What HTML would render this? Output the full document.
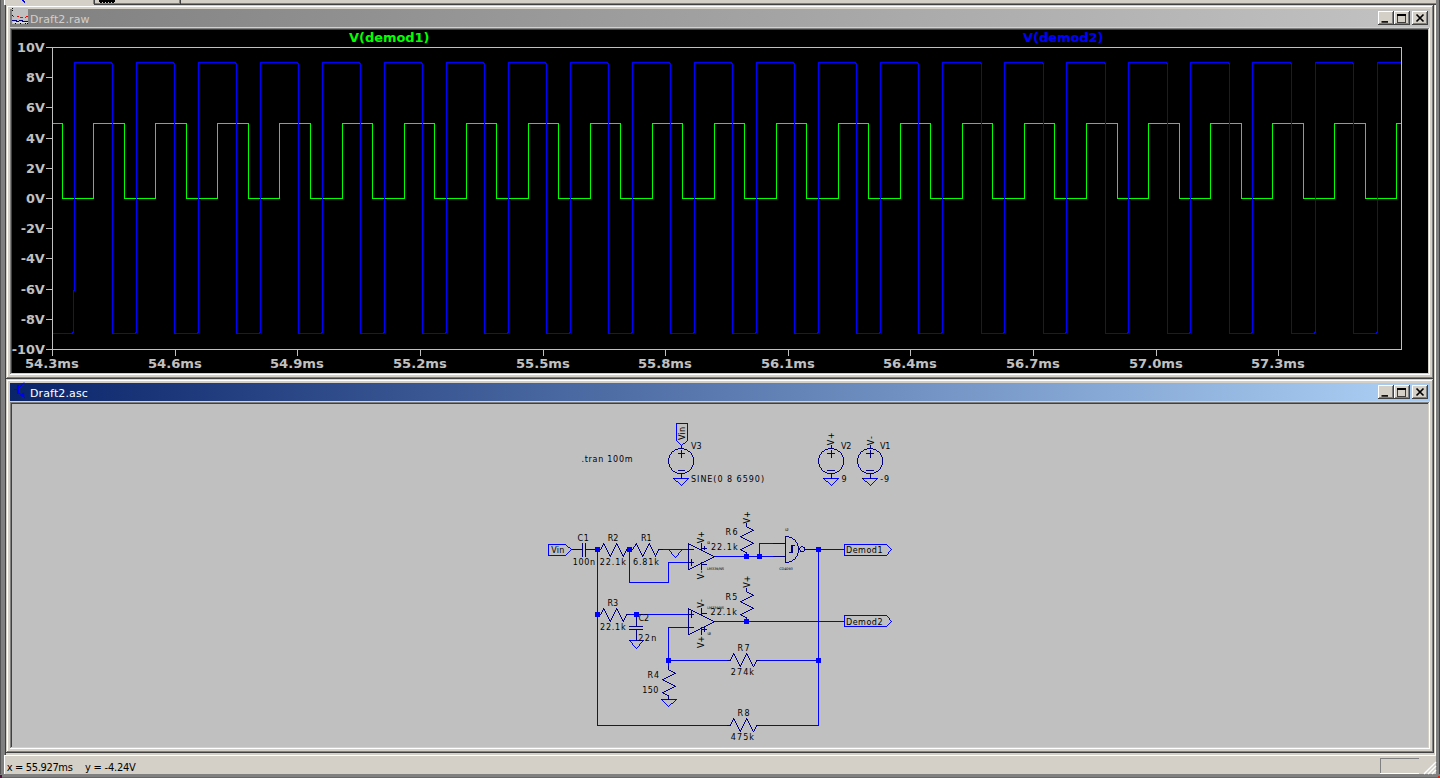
<!DOCTYPE html><html><head><meta charset="utf-8"><title>LTspice</title><style>
html,body{margin:0;padding:0;}body{width:1440px;height:778px;overflow:hidden;background:#d4d0c8;position:relative;font-family:"DejaVu Sans","Liberation Sans",sans-serif;font-size:11px;}
div{box-sizing:border-box}
.btn{position:absolute;width:16px;height:14px;background:#d4d0c8;box-shadow:inset -1px -1px 0 #404040,inset 1px 1px 0 #fff,inset -2px -2px 0 #808080;}
.ttl{letter-spacing:0.12px;position:absolute;left:31px;top:2px;height:18px;line-height:18px;font-size:11px;white-space:pre;}
svg{position:absolute;left:0;top:0;overflow:visible}
</style></head><body>
<div style="position:absolute;left:0px;top:0px;width:5px;height:778px;background:#808080;"></div>
<div style="position:absolute;left:0px;top:0px;width:1px;height:778px;background:#555;"></div>
<div style="position:absolute;left:4px;top:0px;width:1px;height:5px;background:#ffffff;"></div>
<div style="position:absolute;left:1436px;top:0px;width:4px;height:778px;background:#808080;"></div>
<div style="position:absolute;left:1439px;top:0px;width:1px;height:778px;background:#404040;"></div>
<div style="position:absolute;left:0px;top:774px;width:1440px;height:4px;background:#808080;"></div>
<div style="position:absolute;left:0px;top:777px;width:1440px;height:1px;background:#666;"></div>
<div style="position:absolute;left:94px;top:3px;width:1342px;height:1px;background:#808080;"></div>
<div style="position:absolute;left:94px;top:4px;width:1342px;height:1px;background:#404040;"></div>
<div style="position:absolute;left:93px;top:0px;width:1px;height:4px;background:#808080;"></div>
<div style="position:absolute;left:94px;top:0px;width:1px;height:5px;background:#404040;"></div>
<div style="position:absolute;left:179px;top:0px;width:1px;height:4px;background:#808080;"></div>
<div style="position:absolute;left:180px;top:0px;width:1px;height:4px;background:#404040;"></div>
<div style="position:absolute;left:22px;top:0px;width:2px;height:1px;background:#0000ff;"></div>
<div style="position:absolute;left:23px;top:1px;width:2px;height:1px;background:#0000ff;"></div>
<div style="position:absolute;left:24px;top:2px;width:1px;height:1px;background:#0000ff;"></div>
<div style="position:absolute;left:99px;top:0px;width:16px;height:2px;background:#000;"></div>
<div style="position:absolute;left:100px;top:2px;width:2px;height:1px;background:#000;"></div>
<div style="position:absolute;left:103px;top:2px;width:2px;height:1px;background:#000;"></div>
<div style="position:absolute;left:106px;top:2px;width:2px;height:1px;background:#000;"></div>
<div style="position:absolute;left:109px;top:2px;width:2px;height:1px;background:#000;"></div>
<div style="position:absolute;left:112px;top:2px;width:2px;height:1px;background:#000;"></div>
<div style="position:absolute;left:5px;top:5px;width:1px;height:750px;background:#404040;"></div>
<div style="position:absolute;left:1434px;top:5px;width:1px;height:750px;background:#d4d0c8;"></div>
<div style="position:absolute;left:1435px;top:5px;width:1px;height:751px;background:#ffffff;"></div>
<div style="position:absolute;left:6px;top:753px;width:1428px;height:1px;background:#d4d0c8;"></div>
<div style="position:absolute;left:4px;top:755px;width:1432px;height:1px;background:#ffffff;"></div>
<div style="position:absolute;left:4px;top:755px;width:1px;height:19px;background:#ffffff;"></div>
<div style="position:absolute;left:6px;top:5px;width:1428px;height:374px;background:#d4d0c8;box-shadow:inset -1px -1px 0 #404040,inset 1px 1px 0 #d4d0c8,inset -2px -2px 0 #808080,inset 2px 2px 0 #ffffff;">
<div style="position:absolute;left:4px;top:4px;width:1420px;height:18px;background:linear-gradient(to right,#808080 0,#c0c0c0 1366px);color:#d4d0c8;">
<span class="ttl" style="left:20px">Draft2.raw</span>
<div class="btn" style="left:1368px;top:2px"><svg width="16" height="14"><rect x="3.5" y="10.1" width="6.5" height="1.6" fill="#000"/></svg></div>
<div class="btn" style="left:1384px;top:2px"><svg width="16" height="14"><rect x="3.5" y="3.5" width="8" height="8" fill="none" stroke="#000" stroke-opacity="0.7" stroke-width="1"/><rect x="3" y="3" width="9" height="2" fill="#000"/></svg></div>
<div class="btn" style="left:1402px;top:2px"><svg width="16" height="14"><path d="M4.5 3.5 L11.5 10.5 M11.5 3.5 L4.5 10.5" stroke="#000" stroke-width="1.7" fill="none"/></svg></div>
</div>
<div style="position:absolute;left:4px;top:23px;width:1420px;height:347px;background:#000;box-shadow:inset -1px -1px 0 #ffffff,inset 1px 1px 0 #808080,inset -2px -2px 0 #d4d0c8,inset 2px 2px 0 #404040;"></div>
</div>
<div style="position:absolute;left:6px;top:379px;width:1428px;height:374px;background:#d4d0c8;box-shadow:inset -1px -1px 0 #404040,inset 1px 1px 0 #d4d0c8,inset -2px -2px 0 #808080,inset 2px 2px 0 #ffffff;">
<div style="position:absolute;left:4px;top:4px;width:1420px;height:18px;background:linear-gradient(to right,#0a246a 0,#a6caf0 1366px);color:#fff;">
<span class="ttl" style="left:20px">Draft2.asc</span>
<div class="btn" style="left:1368px;top:2px"><svg width="16" height="14"><rect x="3.5" y="10.1" width="6.5" height="1.6" fill="#000"/></svg></div>
<div class="btn" style="left:1384px;top:2px"><svg width="16" height="14"><rect x="3.5" y="3.5" width="8" height="8" fill="none" stroke="#000" stroke-opacity="0.7" stroke-width="1"/><rect x="3" y="3" width="9" height="2" fill="#000"/></svg></div>
<div class="btn" style="left:1402px;top:2px"><svg width="16" height="14"><path d="M4.5 3.5 L11.5 10.5 M11.5 3.5 L4.5 10.5" stroke="#000" stroke-width="1.7" fill="none"/></svg></div>
</div>
<div style="position:absolute;left:4px;top:23px;width:1420px;height:347px;background:#c0c0c0;box-shadow:inset -1px -1px 0 #ffffff,inset 1px 1px 0 #808080,inset -2px -2px 0 #d4d0c8,inset 2px 2px 0 #404040;"></div>
</div>
<svg width="1440" height="778" shape-rendering="crispEdges">
<rect x="12" y="8" width="16" height="16" fill="#c0c0c0"/>
<rect x="12" y="8" width="1" height="1" fill="#000"/>
<rect x="12" y="10" width="1" height="1" fill="#000"/>
<rect x="12" y="15" width="1" height="1" fill="#000"/>
<rect x="12" y="20" width="1" height="1" fill="#000"/>
<rect x="15" y="23" width="1" height="1" fill="#000"/>
<rect x="20" y="23" width="1" height="1" fill="#000"/>
<rect x="25" y="23" width="1" height="1" fill="#000"/>
<rect x="27" y="23" width="1" height="1" fill="#000"/>
<rect x="13" y="22" width="15" height="1" fill="#e0e0e0"/>
<path d="M13 16.5h1 M17 16.5h2 M20 17.5h3 M25 17.5h1 M26 16.5h2" stroke="#ff0000" stroke-width="1" fill="none"/>
<path d="M12 20.5h5 M16 21.5h3 M19 20.5h4 M22 21.5h6" stroke="#000080" stroke-width="1.4" fill="none"/>
<g stroke="#0000ff" fill="none" stroke-width="1">
<path d="M14 389.5h4" />
<path d="M18 385v9" stroke-width="2"/>
<path d="M19 388 L24 382.5" shape-rendering="auto"/>
<path d="M19 393 L25 398" shape-rendering="auto"/>
<path d="M20.5 395.5 l3 -2.5 l0.5 3.5 z" fill="#0000ff" shape-rendering="auto"/>
</g>
</svg>
<svg width="1440" height="778" shape-rendering="crispEdges" style="font-family:'DejaVu Sans',sans-serif;font-weight:bold;font-size:12px">
<path d="M52.5 47.5 H1401.5 V349.5 H52.5 Z" fill="none" stroke="#c0c0c0" stroke-width="1"/>
<path d="M46 47.5 H52" stroke="#c0c0c0" stroke-width="1"/>
<text transform="translate(44.8 51.9) scale(1.07 1)" text-anchor="end" fill="#c0c0c0">10V</text>
<path d="M46 77.5 H52" stroke="#c0c0c0" stroke-width="1"/>
<text transform="translate(44.8 81.9) scale(1.07 1)" text-anchor="end" fill="#c0c0c0">8V</text>
<path d="M46 107.5 H52" stroke="#c0c0c0" stroke-width="1"/>
<text transform="translate(44.8 111.9) scale(1.07 1)" text-anchor="end" fill="#c0c0c0">6V</text>
<path d="M46 138.5 H52" stroke="#c0c0c0" stroke-width="1"/>
<text transform="translate(44.8 142.9) scale(1.07 1)" text-anchor="end" fill="#c0c0c0">4V</text>
<path d="M46 168.5 H52" stroke="#c0c0c0" stroke-width="1"/>
<text transform="translate(44.8 172.9) scale(1.07 1)" text-anchor="end" fill="#c0c0c0">2V</text>
<path d="M46 198.5 H52" stroke="#c0c0c0" stroke-width="1"/>
<text transform="translate(44.8 202.9) scale(1.07 1)" text-anchor="end" fill="#c0c0c0">0V</text>
<path d="M46 228.5 H52" stroke="#c0c0c0" stroke-width="1"/>
<text transform="translate(44.8 232.9) scale(1.07 1)" text-anchor="end" fill="#c0c0c0">-2V</text>
<path d="M46 258.5 H52" stroke="#c0c0c0" stroke-width="1"/>
<text transform="translate(44.8 262.9) scale(1.07 1)" text-anchor="end" fill="#c0c0c0">-4V</text>
<path d="M46 289.5 H52" stroke="#c0c0c0" stroke-width="1"/>
<text transform="translate(44.8 293.9) scale(1.07 1)" text-anchor="end" fill="#c0c0c0">-6V</text>
<path d="M46 319.5 H52" stroke="#c0c0c0" stroke-width="1"/>
<text transform="translate(44.8 323.9) scale(1.07 1)" text-anchor="end" fill="#c0c0c0">-8V</text>
<path d="M46 349.5 H52" stroke="#c0c0c0" stroke-width="1"/>
<text transform="translate(44.8 353.9) scale(1.07 1)" text-anchor="end" fill="#c0c0c0">-10V</text>
<path d="M52.5 349 V356" stroke="#c0c0c0" stroke-width="1"/>
<text transform="translate(51.9 368) scale(1.095 1)" text-anchor="middle" fill="#c0c0c0">54.3ms</text>
<path d="M175.5 349 V356" stroke="#c0c0c0" stroke-width="1"/>
<text transform="translate(174.9 368) scale(1.095 1)" text-anchor="middle" fill="#c0c0c0">54.6ms</text>
<path d="M297.5 349 V356" stroke="#c0c0c0" stroke-width="1"/>
<text transform="translate(296.9 368) scale(1.095 1)" text-anchor="middle" fill="#c0c0c0">54.9ms</text>
<path d="M420.5 349 V356" stroke="#c0c0c0" stroke-width="1"/>
<text transform="translate(419.9 368) scale(1.095 1)" text-anchor="middle" fill="#c0c0c0">55.2ms</text>
<path d="M543.5 349 V356" stroke="#c0c0c0" stroke-width="1"/>
<text transform="translate(542.9 368) scale(1.095 1)" text-anchor="middle" fill="#c0c0c0">55.5ms</text>
<path d="M665.5 349 V356" stroke="#c0c0c0" stroke-width="1"/>
<text transform="translate(664.9 368) scale(1.095 1)" text-anchor="middle" fill="#c0c0c0">55.8ms</text>
<path d="M788.5 349 V356" stroke="#c0c0c0" stroke-width="1"/>
<text transform="translate(787.9 368) scale(1.095 1)" text-anchor="middle" fill="#c0c0c0">56.1ms</text>
<path d="M910.5 349 V356" stroke="#c0c0c0" stroke-width="1"/>
<text transform="translate(909.9 368) scale(1.095 1)" text-anchor="middle" fill="#c0c0c0">56.4ms</text>
<path d="M1033.5 349 V356" stroke="#c0c0c0" stroke-width="1"/>
<text transform="translate(1032.9 368) scale(1.095 1)" text-anchor="middle" fill="#c0c0c0">56.7ms</text>
<path d="M1156.5 349 V356" stroke="#c0c0c0" stroke-width="1"/>
<text transform="translate(1155.9 368) scale(1.095 1)" text-anchor="middle" fill="#c0c0c0">57.0ms</text>
<path d="M1278.5 349 V356" stroke="#c0c0c0" stroke-width="1"/>
<text transform="translate(1277.9 368) scale(1.095 1)" text-anchor="middle" fill="#c0c0c0">57.3ms</text>
<path d="M52.5 123.5 H62.5 V198.5 H93.5 V123.5 H124.5 V198.5 H155.5 V123.5 H186.5 V198.5 H217.5 V123.5 H248.5 V198.5 H279.5 V123.5 H310.5 V198.5 H342.5 V123.5 H372.5 V198.5 H404.5 V123.5 H434.5 V198.5 H466.5 V123.5 H496.5 V198.5 H528.5 V123.5 H558.5 V198.5 H590.5 V123.5 H620.5 V198.5 H652.5 V123.5 H682.5 V198.5 H714.5 V123.5 H744.5 V198.5 H776.5 V123.5 H806.5 V198.5 H838.5 V123.5 H868.5 V198.5 H900.5 V123.5 H930.5 V198.5 H962.5 V123.5 H992.5 V198.5 H1024.5 V123.5 H1054.5 V198.5 H1086.5 V123.5 H1117.5 V198.5 H1148.5 V123.5 H1179.5 V198.5 H1210.5 V123.5 H1241.5 V198.5 H1272.5 V123.5 H1303.5 V198.5 H1334.5 V123.5 H1365.5 V198.5 H1396.5 V123.5 H1400.5" fill="none" stroke="#00ff00" stroke-width="1"/>
<path d="M52.5 333.5 H72.5 V332.5 H73.5 V290.5 H74.5 V62.5 H111.5 V63.5 H112.5 V333.5 H135.5 V332.5 H136.5 V62.5 H173.5 V63.5 H174.5 V333.5 H197.5 V332.5 H198.5 V62.5 H235.5 V63.5 H236.5 V333.5 H259.5 V332.5 H260.5 V62.5 H297.5 V63.5 H298.5 V333.5 H321.5 V332.5 H322.5 V62.5 H359.5 V63.5 H360.5 V333.5 H383.5 V332.5 H384.5 V62.5 H421.5 V63.5 H422.5 V333.5 H445.5 V332.5 H446.5 V62.5 H483.5 V63.5 H484.5 V333.5 H507.5 V332.5 H508.5 V62.5 H545.5 V63.5 H546.5 V333.5 H569.5 V332.5 H570.5 V62.5 H607.5 V63.5 H608.5 V333.5 H631.5 V332.5 H632.5 V62.5 H669.5 V63.5 H670.5 V333.5 H693.5 V332.5 H694.5 V62.5 H731.5 V63.5 H732.5 V333.5 H755.5 V332.5 H756.5 V62.5 H793.5 V63.5 H794.5 V333.5 H817.5 V332.5 H818.5 V62.5 H855.5 V63.5 H856.5 V333.5 H879.5 V332.5 H880.5 V62.5 H917.5 V63.5 H918.5 V333.5 H941.5 V332.5 H942.5 V62.5 H980.5 V63.5 H981.5 V333.5 H1003.5 V332.5 H1004.5 V62.5 H1042.5 V63.5 H1043.5 V333.5 H1065.5 V332.5 H1066.5 V62.5 H1104.5 V63.5 H1105.5 V333.5 H1127.5 V332.5 H1128.5 V62.5 H1166.5 V63.5 H1167.5 V333.5 H1189.5 V332.5 H1190.5 V62.5 H1228.5 V63.5 H1229.5 V333.5 H1251.5 V332.5 H1252.5 V62.5 H1290.5 V63.5 H1291.5 V333.5 H1314.5 V332.5 H1315.5 V62.5 H1352.5 V63.5 H1353.5 V333.5 H1376.5 V332.5 H1377.5 V62.5 H1400.5" fill="none" stroke="#0000ff" stroke-width="1"/>
<text x="349" y="42.05" fill="#00ff00" textLength="80.5" lengthAdjust="spacingAndGlyphs">V(demod1)</text>
<text x="1023" y="42.05" fill="#0000ff" textLength="80.5" lengthAdjust="spacingAndGlyphs">V(demod2)</text>
</svg>
<svg width="1440" height="778" shape-rendering="crispEdges" style="font-family:'DejaVu Sans',sans-serif;" fill="#000">
<path d="M676 423h12v1h-12zM676 424h1v1h-1zM687 424h1v1h-1zM676 425h1v1h-1zM687 425h1v1h-1zM676 426h1v1h-1zM687 426h1v1h-1zM676 427h1v1h-1zM687 427h1v1h-1zM676 428h1v1h-1zM687 428h1v1h-1zM676 429h1v1h-1zM687 429h1v1h-1zM676 430h1v1h-1zM687 430h1v1h-1zM676 431h1v1h-1zM687 431h1v1h-1zM676 432h1v1h-1zM687 432h1v1h-1zM676 433h1v1h-1zM687 433h1v1h-1zM676 434h1v1h-1zM687 434h1v1h-1zM676 435h1v1h-1zM687 435h1v1h-1zM676 436h1v1h-1zM687 436h1v1h-1zM676 437h1v1h-1zM687 437h1v1h-1zM676 438h1v1h-1zM687 438h1v1h-1zM676 439h1v1h-1zM687 439h1v1h-1zM676 440h1v1h-1zM687 440h1v1h-1zM677 441h1v1h-1zM686 441h1v1h-1zM678 442h1v1h-1zM685 442h1v1h-1zM679 443h1v1h-1zM683 443h2v1h-2zM680 444h1v1h-1zM682 444h1v1h-1zM673 478h8v1h-8zM682 478h7v1h-7zM823 478h8v1h-8zM832 478h7v1h-7zM862 478h8v1h-8zM871 478h7v1h-7zM674 479h1v1h-1zM687 479h1v1h-1zM824 479h1v1h-1zM837 479h1v1h-1zM863 479h1v1h-1zM876 479h1v1h-1zM675 480h1v1h-1zM686 480h1v1h-1zM825 480h1v1h-1zM836 480h1v1h-1zM864 480h1v1h-1zM875 480h1v1h-1zM676 481h2v1h-2zM685 481h1v1h-1zM826 481h2v1h-2zM835 481h1v1h-1zM865 481h2v1h-2zM874 481h1v1h-1zM678 482h1v1h-1zM684 482h1v1h-1zM828 482h1v1h-1zM834 482h1v1h-1zM867 482h1v1h-1zM873 482h1v1h-1zM679 483h1v1h-1zM683 483h1v1h-1zM829 483h1v1h-1zM833 483h1v1h-1zM868 483h1v1h-1zM872 483h1v1h-1zM680 484h1v1h-1zM682 484h1v1h-1zM830 484h1v1h-1zM832 484h1v1h-1zM869 484h1v1h-1zM871 484h1v1h-1zM681 485h1v1h-1zM831 485h1v1h-1zM870 485h1v1h-1zM759 543h14v1h-14zM548 544h18v1h-18zM759 544h1v1h-1zM844 544h43v1h-43zM548 545h1v1h-1zM566 545h1v1h-1zM759 545h1v1h-1zM844 545h1v1h-1zM887 545h1v1h-1zM548 546h1v1h-1zM567 546h1v1h-1zM759 546h1v1h-1zM844 546h1v1h-1zM888 546h1v1h-1zM548 547h1v1h-1zM568 547h2v1h-2zM595 547h5v1h-5zM627 547h5v1h-5zM759 547h1v1h-1zM816 547h5v1h-5zM844 547h1v1h-1zM889 547h1v1h-1zM548 548h1v1h-1zM570 548h1v1h-1zM595 548h5v1h-5zM627 548h5v1h-5zM759 548h1v1h-1zM816 548h5v1h-5zM844 548h1v1h-1zM890 548h1v1h-1zM548 549h1v1h-1zM595 549h5v1h-5zM627 549h5v1h-5zM663 549h25v1h-25zM759 549h1v1h-1zM816 549h29v1h-29zM891 549h1v1h-1zM548 550h1v1h-1zM570 550h1v1h-1zM595 550h5v1h-5zM627 550h5v1h-5zM669 550h1v1h-1zM681 550h1v1h-1zM759 550h1v1h-1zM816 550h5v1h-5zM844 550h1v1h-1zM890 550h1v1h-1zM548 551h1v1h-1zM569 551h1v1h-1zM595 551h5v1h-5zM627 551h5v1h-5zM670 551h1v1h-1zM680 551h1v1h-1zM759 551h1v1h-1zM816 551h5v1h-5zM844 551h1v1h-1zM889 551h1v1h-1zM548 552h1v1h-1zM568 552h1v1h-1zM597 552h1v1h-1zM629 552h1v1h-1zM671 552h1v1h-1zM679 552h1v1h-1zM759 552h1v1h-1zM818 552h1v1h-1zM844 552h1v1h-1zM888 552h1v1h-1zM548 553h1v1h-1zM567 553h1v1h-1zM597 553h1v1h-1zM629 553h1v1h-1zM671 553h1v1h-1zM678 553h1v1h-1zM759 553h1v1h-1zM818 553h1v1h-1zM844 553h1v1h-1zM888 553h1v1h-1zM548 554h1v1h-1zM566 554h1v1h-1zM597 554h1v1h-1zM629 554h1v1h-1zM672 554h1v1h-1zM678 554h1v1h-1zM744 554h5v1h-5zM757 554h5v1h-5zM818 554h1v1h-1zM844 554h1v1h-1zM887 554h1v1h-1zM548 555h18v1h-18zM597 555h1v1h-1zM629 555h1v1h-1zM673 555h1v1h-1zM677 555h1v1h-1zM744 555h5v1h-5zM757 555h5v1h-5zM818 555h1v1h-1zM844 555h43v1h-43zM597 556h1v1h-1zM629 556h1v1h-1zM674 556h1v1h-1zM676 556h1v1h-1zM715 556h58v1h-58zM818 556h1v1h-1zM597 557h1v1h-1zM629 557h1v1h-1zM675 557h1v1h-1zM744 557h5v1h-5zM757 557h5v1h-5zM818 557h1v1h-1zM597 558h1v1h-1zM629 558h1v1h-1zM744 558h5v1h-5zM757 558h5v1h-5zM818 558h1v1h-1zM597 559h1v1h-1zM629 559h1v1h-1zM818 559h1v1h-1zM597 560h1v1h-1zM629 560h1v1h-1zM818 560h1v1h-1zM597 561h1v1h-1zM629 561h1v1h-1zM818 561h1v1h-1zM597 562h1v1h-1zM629 562h1v1h-1zM668 562h20v1h-20zM818 562h1v1h-1zM597 563h1v1h-1zM629 563h1v1h-1zM668 563h1v1h-1zM818 563h1v1h-1zM597 564h1v1h-1zM629 564h1v1h-1zM668 564h1v1h-1zM818 564h1v1h-1zM597 565h1v1h-1zM629 565h1v1h-1zM668 565h1v1h-1zM818 565h1v1h-1zM597 566h1v1h-1zM629 566h1v1h-1zM668 566h1v1h-1zM818 566h1v1h-1zM597 567h1v1h-1zM629 567h1v1h-1zM668 567h1v1h-1zM818 567h1v1h-1zM597 568h1v1h-1zM629 568h1v1h-1zM668 568h1v1h-1zM818 568h1v1h-1zM597 569h1v1h-1zM629 569h1v1h-1zM668 569h1v1h-1zM818 569h1v1h-1zM597 570h1v1h-1zM629 570h1v1h-1zM668 570h1v1h-1zM818 570h1v1h-1zM597 571h1v1h-1zM629 571h1v1h-1zM668 571h1v1h-1zM818 571h1v1h-1zM597 572h1v1h-1zM629 572h1v1h-1zM668 572h1v1h-1zM818 572h1v1h-1zM597 573h1v1h-1zM629 573h1v1h-1zM668 573h1v1h-1zM818 573h1v1h-1zM597 574h1v1h-1zM629 574h1v1h-1zM668 574h1v1h-1zM818 574h1v1h-1zM597 575h1v1h-1zM629 575h1v1h-1zM668 575h1v1h-1zM818 575h1v1h-1zM597 576h1v1h-1zM629 576h1v1h-1zM668 576h1v1h-1zM818 576h1v1h-1zM597 577h1v1h-1zM629 577h1v1h-1zM668 577h1v1h-1zM818 577h1v1h-1zM597 578h1v1h-1zM629 578h1v1h-1zM668 578h1v1h-1zM818 578h1v1h-1zM597 579h1v1h-1zM629 579h1v1h-1zM668 579h1v1h-1zM818 579h1v1h-1zM597 580h1v1h-1zM629 580h1v1h-1zM668 580h1v1h-1zM818 580h1v1h-1zM597 581h1v1h-1zM629 581h1v1h-1zM668 581h1v1h-1zM818 581h1v1h-1zM597 582h1v1h-1zM629 582h40v1h-40zM818 582h1v1h-1zM597 583h1v1h-1zM818 583h1v1h-1zM597 584h1v1h-1zM818 584h1v1h-1zM597 585h1v1h-1zM818 585h1v1h-1zM597 586h1v1h-1zM818 586h1v1h-1zM597 587h1v1h-1zM818 587h1v1h-1zM597 588h1v1h-1zM818 588h1v1h-1zM597 589h1v1h-1zM818 589h1v1h-1zM597 590h1v1h-1zM818 590h1v1h-1zM597 591h1v1h-1zM818 591h1v1h-1zM597 592h1v1h-1zM818 592h1v1h-1zM597 593h1v1h-1zM818 593h1v1h-1zM597 594h1v1h-1zM818 594h1v1h-1zM597 595h1v1h-1zM818 595h1v1h-1zM597 596h1v1h-1zM818 596h1v1h-1zM597 597h1v1h-1zM818 597h1v1h-1zM597 598h1v1h-1zM818 598h1v1h-1zM597 599h1v1h-1zM818 599h1v1h-1zM597 600h1v1h-1zM818 600h1v1h-1zM597 601h1v1h-1zM818 601h1v1h-1zM597 602h1v1h-1zM818 602h1v1h-1zM597 603h1v1h-1zM818 603h1v1h-1zM597 604h1v1h-1zM818 604h1v1h-1zM597 605h1v1h-1zM818 605h1v1h-1zM597 606h1v1h-1zM818 606h1v1h-1zM597 607h1v1h-1zM818 607h1v1h-1zM597 608h1v1h-1zM818 608h1v1h-1zM597 609h1v1h-1zM818 609h1v1h-1zM597 610h1v1h-1zM818 610h1v1h-1zM597 611h1v1h-1zM818 611h1v1h-1zM595 612h5v1h-5zM634 612h5v1h-5zM818 612h1v1h-1zM595 613h5v1h-5zM634 613h5v1h-5zM818 613h1v1h-1zM595 614h5v1h-5zM630 614h58v1h-58zM818 614h1v1h-1zM595 615h5v1h-5zM634 615h5v1h-5zM818 615h1v1h-1zM844 615h43v1h-43zM595 616h5v1h-5zM634 616h5v1h-5zM818 616h1v1h-1zM844 616h1v1h-1zM887 616h1v1h-1zM597 617h1v1h-1zM818 617h1v1h-1zM844 617h1v1h-1zM888 617h1v1h-1zM597 618h1v1h-1zM818 618h1v1h-1zM844 618h1v1h-1zM889 618h1v1h-1zM597 619h1v1h-1zM744 619h5v1h-5zM818 619h1v1h-1zM844 619h1v1h-1zM889 619h1v1h-1zM597 620h1v1h-1zM744 620h5v1h-5zM818 620h1v1h-1zM844 620h1v1h-1zM890 620h1v1h-1zM597 621h1v1h-1zM715 621h130v1h-130zM891 621h1v1h-1zM597 622h1v1h-1zM744 622h5v1h-5zM818 622h1v1h-1zM844 622h1v1h-1zM890 622h1v1h-1zM597 623h1v1h-1zM744 623h5v1h-5zM818 623h1v1h-1zM844 623h1v1h-1zM889 623h1v1h-1zM597 624h1v1h-1zM818 624h1v1h-1zM844 624h1v1h-1zM888 624h1v1h-1zM597 625h1v1h-1zM818 625h1v1h-1zM844 625h1v1h-1zM887 625h1v1h-1zM597 626h1v1h-1zM818 626h1v1h-1zM844 626h43v1h-43zM597 627h1v1h-1zM668 627h20v1h-20zM818 627h1v1h-1zM597 628h1v1h-1zM668 628h1v1h-1zM818 628h1v1h-1zM597 629h1v1h-1zM668 629h1v1h-1zM818 629h1v1h-1zM597 630h1v1h-1zM668 630h1v1h-1zM818 630h1v1h-1zM597 631h1v1h-1zM668 631h1v1h-1zM818 631h1v1h-1zM597 632h1v1h-1zM668 632h1v1h-1zM818 632h1v1h-1zM597 633h1v1h-1zM668 633h1v1h-1zM818 633h1v1h-1zM597 634h1v1h-1zM668 634h1v1h-1zM818 634h1v1h-1zM597 635h1v1h-1zM668 635h1v1h-1zM818 635h1v1h-1zM597 636h1v1h-1zM668 636h1v1h-1zM818 636h1v1h-1zM597 637h1v1h-1zM668 637h1v1h-1zM818 637h1v1h-1zM597 638h1v1h-1zM668 638h1v1h-1zM818 638h1v1h-1zM597 639h1v1h-1zM668 639h1v1h-1zM818 639h1v1h-1zM597 640h1v1h-1zM629 640h7v1h-7zM637 640h7v1h-7zM668 640h1v1h-1zM818 640h1v1h-1zM597 641h1v1h-1zM630 641h1v1h-1zM642 641h1v1h-1zM668 641h1v1h-1zM818 641h1v1h-1zM597 642h1v1h-1zM631 642h1v1h-1zM641 642h1v1h-1zM668 642h1v1h-1zM818 642h1v1h-1zM597 643h1v1h-1zM632 643h1v1h-1zM640 643h1v1h-1zM668 643h1v1h-1zM818 643h1v1h-1zM597 644h1v1h-1zM632 644h1v1h-1zM639 644h1v1h-1zM668 644h1v1h-1zM818 644h1v1h-1zM597 645h1v1h-1zM633 645h1v1h-1zM639 645h1v1h-1zM668 645h1v1h-1zM818 645h1v1h-1zM597 646h1v1h-1zM634 646h1v1h-1zM638 646h1v1h-1zM668 646h1v1h-1zM818 646h1v1h-1zM597 647h1v1h-1zM635 647h1v1h-1zM637 647h1v1h-1zM668 647h1v1h-1zM818 647h1v1h-1zM597 648h1v1h-1zM636 648h1v1h-1zM668 648h1v1h-1zM818 648h1v1h-1zM597 649h1v1h-1zM668 649h1v1h-1zM818 649h1v1h-1zM597 650h1v1h-1zM668 650h1v1h-1zM818 650h1v1h-1zM597 651h1v1h-1zM668 651h1v1h-1zM818 651h1v1h-1zM597 652h1v1h-1zM668 652h1v1h-1zM818 652h1v1h-1zM597 653h1v1h-1zM668 653h1v1h-1zM818 653h1v1h-1zM597 654h1v1h-1zM668 654h1v1h-1zM818 654h1v1h-1zM597 655h1v1h-1zM668 655h1v1h-1zM818 655h1v1h-1zM597 656h1v1h-1zM668 656h1v1h-1zM818 656h1v1h-1zM597 657h1v1h-1zM668 657h1v1h-1zM818 657h1v1h-1zM597 658h1v1h-1zM666 658h5v1h-5zM816 658h5v1h-5zM597 659h1v1h-1zM666 659h5v1h-5zM816 659h5v1h-5zM597 660h1v1h-1zM666 660h61v1h-61zM760 660h61v1h-61zM597 661h1v1h-1zM666 661h5v1h-5zM816 661h5v1h-5zM597 662h1v1h-1zM666 662h5v1h-5zM816 662h5v1h-5zM597 663h1v1h-1zM668 663h1v1h-1zM818 663h1v1h-1zM597 664h1v1h-1zM668 664h1v1h-1zM818 664h1v1h-1zM597 665h1v1h-1zM668 665h1v1h-1zM818 665h1v1h-1zM597 666h1v1h-1zM818 666h1v1h-1zM597 667h1v1h-1zM818 667h1v1h-1zM597 668h1v1h-1zM818 668h1v1h-1zM597 669h1v1h-1zM818 669h1v1h-1zM597 670h1v1h-1zM818 670h1v1h-1zM597 671h1v1h-1zM818 671h1v1h-1zM597 672h1v1h-1zM818 672h1v1h-1zM597 673h1v1h-1zM818 673h1v1h-1zM597 674h1v1h-1zM818 674h1v1h-1zM597 675h1v1h-1zM818 675h1v1h-1zM597 676h1v1h-1zM818 676h1v1h-1zM597 677h1v1h-1zM818 677h1v1h-1zM597 678h1v1h-1zM818 678h1v1h-1zM597 679h1v1h-1zM818 679h1v1h-1zM597 680h1v1h-1zM818 680h1v1h-1zM597 681h1v1h-1zM818 681h1v1h-1zM597 682h1v1h-1zM818 682h1v1h-1zM597 683h1v1h-1zM818 683h1v1h-1zM597 684h1v1h-1zM818 684h1v1h-1zM597 685h1v1h-1zM818 685h1v1h-1zM597 686h1v1h-1zM818 686h1v1h-1zM597 687h1v1h-1zM818 687h1v1h-1zM597 688h1v1h-1zM818 688h1v1h-1zM597 689h1v1h-1zM818 689h1v1h-1zM597 690h1v1h-1zM818 690h1v1h-1zM597 691h1v1h-1zM818 691h1v1h-1zM597 692h1v1h-1zM818 692h1v1h-1zM597 693h1v1h-1zM818 693h1v1h-1zM597 694h1v1h-1zM818 694h1v1h-1zM597 695h1v1h-1zM818 695h1v1h-1zM597 696h1v1h-1zM818 696h1v1h-1zM597 697h1v1h-1zM818 697h1v1h-1zM597 698h1v1h-1zM818 698h1v1h-1zM597 699h1v1h-1zM661 699h7v1h-7zM669 699h8v1h-8zM818 699h1v1h-1zM597 700h1v1h-1zM662 700h1v1h-1zM675 700h1v1h-1zM818 700h1v1h-1zM597 701h1v1h-1zM663 701h1v1h-1zM674 701h1v1h-1zM818 701h1v1h-1zM597 702h1v1h-1zM664 702h1v1h-1zM673 702h1v1h-1zM818 702h1v1h-1zM597 703h1v1h-1zM665 703h1v1h-1zM671 703h2v1h-2zM818 703h1v1h-1zM597 704h1v1h-1zM666 704h1v1h-1zM670 704h1v1h-1zM818 704h1v1h-1zM597 705h1v1h-1zM667 705h1v1h-1zM669 705h1v1h-1zM818 705h1v1h-1zM597 706h1v1h-1zM668 706h1v1h-1zM818 706h1v1h-1zM597 707h1v1h-1zM818 707h1v1h-1zM597 708h1v1h-1zM818 708h1v1h-1zM597 709h1v1h-1zM818 709h1v1h-1zM597 710h1v1h-1zM818 710h1v1h-1zM597 711h1v1h-1zM818 711h1v1h-1zM597 712h1v1h-1zM818 712h1v1h-1zM597 713h1v1h-1zM818 713h1v1h-1zM597 714h1v1h-1zM818 714h1v1h-1zM597 715h1v1h-1zM818 715h1v1h-1zM597 716h1v1h-1zM818 716h1v1h-1zM597 717h1v1h-1zM818 717h1v1h-1zM597 718h1v1h-1zM818 718h1v1h-1zM597 719h1v1h-1zM818 719h1v1h-1zM597 720h1v1h-1zM818 720h1v1h-1zM597 721h1v1h-1zM818 721h1v1h-1zM597 722h1v1h-1zM818 722h1v1h-1zM597 723h1v1h-1zM818 723h1v1h-1zM597 724h1v1h-1zM818 724h1v1h-1zM597 725h130v1h-130zM760 725h59v1h-59z" fill="#0000ff"/>
<path d="M681 445h1v1h-1zM831 445h1v1h-1zM870 445h1v1h-1zM681 446h1v1h-1zM831 446h1v1h-1zM870 446h1v1h-1zM681 447h1v1h-1zM831 447h1v1h-1zM870 447h1v1h-1zM678 448h6v1h-6zM828 448h6v1h-6zM867 448h6v1h-6zM675 449h3v1h-3zM684 449h3v1h-3zM825 449h3v1h-3zM834 449h3v1h-3zM864 449h3v1h-3zM873 449h3v1h-3zM674 450h1v1h-1zM681 450h1v1h-1zM687 450h1v1h-1zM824 450h1v1h-1zM831 450h1v1h-1zM837 450h1v1h-1zM863 450h1v1h-1zM870 450h1v1h-1zM876 450h1v1h-1zM672 451h2v1h-2zM681 451h1v1h-1zM688 451h2v1h-2zM822 451h2v1h-2zM831 451h1v1h-1zM838 451h2v1h-2zM861 451h2v1h-2zM870 451h1v1h-1zM877 451h2v1h-2zM671 452h1v1h-1zM681 452h1v1h-1zM690 452h1v1h-1zM821 452h1v1h-1zM831 452h1v1h-1zM840 452h1v1h-1zM860 452h1v1h-1zM870 452h1v1h-1zM879 452h1v1h-1zM671 453h1v1h-1zM678 453h7v1h-7zM691 453h1v1h-1zM821 453h1v1h-1zM827 453h8v1h-8zM841 453h1v1h-1zM860 453h1v1h-1zM866 453h8v1h-8zM880 453h1v1h-1zM670 454h1v1h-1zM681 454h1v1h-1zM691 454h1v1h-1zM820 454h1v1h-1zM831 454h1v1h-1zM841 454h1v1h-1zM859 454h1v1h-1zM870 454h1v1h-1zM880 454h1v1h-1zM669 455h1v1h-1zM681 455h1v1h-1zM692 455h1v1h-1zM819 455h1v1h-1zM831 455h1v1h-1zM842 455h1v1h-1zM858 455h1v1h-1zM870 455h1v1h-1zM881 455h1v1h-1zM669 456h1v1h-1zM681 456h1v1h-1zM692 456h1v1h-1zM819 456h1v1h-1zM831 456h1v1h-1zM842 456h1v1h-1zM858 456h1v1h-1zM870 456h1v1h-1zM881 456h1v1h-1zM669 457h1v1h-1zM681 457h1v1h-1zM693 457h1v1h-1zM819 457h1v1h-1zM831 457h1v1h-1zM843 457h1v1h-1zM858 457h1v1h-1zM870 457h1v1h-1zM882 457h1v1h-1zM668 458h1v1h-1zM693 458h1v1h-1zM818 458h1v1h-1zM843 458h1v1h-1zM857 458h1v1h-1zM882 458h1v1h-1zM668 459h1v1h-1zM693 459h1v1h-1zM818 459h1v1h-1zM843 459h1v1h-1zM857 459h1v1h-1zM882 459h1v1h-1zM668 460h1v1h-1zM693 460h1v1h-1zM818 460h1v1h-1zM843 460h1v1h-1zM857 460h1v1h-1zM882 460h1v1h-1zM668 461h1v1h-1zM693 461h1v1h-1zM818 461h1v1h-1zM843 461h1v1h-1zM857 461h1v1h-1zM882 461h1v1h-1zM668 462h1v1h-1zM693 462h1v1h-1zM818 462h1v1h-1zM843 462h1v1h-1zM857 462h1v1h-1zM882 462h1v1h-1zM668 463h1v1h-1zM693 463h1v1h-1zM818 463h1v1h-1zM843 463h1v1h-1zM857 463h1v1h-1zM882 463h1v1h-1zM669 464h1v1h-1zM693 464h1v1h-1zM819 464h1v1h-1zM843 464h1v1h-1zM858 464h1v1h-1zM882 464h1v1h-1zM669 465h1v1h-1zM692 465h1v1h-1zM819 465h1v1h-1zM842 465h1v1h-1zM858 465h1v1h-1zM881 465h1v1h-1zM669 466h1v1h-1zM692 466h1v1h-1zM819 466h1v1h-1zM842 466h1v1h-1zM858 466h1v1h-1zM881 466h1v1h-1zM670 467h1v1h-1zM691 467h1v1h-1zM820 467h1v1h-1zM841 467h1v1h-1zM859 467h1v1h-1zM880 467h1v1h-1zM671 468h1v1h-1zM691 468h1v1h-1zM821 468h1v1h-1zM841 468h1v1h-1zM860 468h1v1h-1zM880 468h1v1h-1zM671 469h1v1h-1zM690 469h1v1h-1zM821 469h1v1h-1zM840 469h1v1h-1zM860 469h1v1h-1zM879 469h1v1h-1zM672 470h1v1h-1zM678 470h7v1h-7zM689 470h1v1h-1zM822 470h1v1h-1zM827 470h8v1h-8zM839 470h1v1h-1zM861 470h1v1h-1zM866 470h8v1h-8zM878 470h1v1h-1zM673 471h2v1h-2zM687 471h2v1h-2zM823 471h2v1h-2zM837 471h2v1h-2zM862 471h2v1h-2zM876 471h2v1h-2zM675 472h2v1h-2zM685 472h2v1h-2zM825 472h2v1h-2zM835 472h2v1h-2zM864 472h2v1h-2zM874 472h2v1h-2zM677 473h8v1h-8zM827 473h8v1h-8zM866 473h8v1h-8zM681 474h1v1h-1zM831 474h1v1h-1zM870 474h1v1h-1zM681 475h1v1h-1zM831 475h1v1h-1zM870 475h1v1h-1zM681 476h1v1h-1zM831 476h1v1h-1zM870 476h1v1h-1zM681 477h1v1h-1zM831 477h1v1h-1zM870 477h1v1h-1zM681 478h1v1h-1zM831 478h1v1h-1zM870 478h1v1h-1zM746 523h1v1h-1zM746 524h1v1h-1zM746 525h1v1h-1zM746 526h1v1h-1zM747 527h2v1h-2zM749 528h2v1h-2zM751 529h2v1h-2zM752 530h2v1h-2zM750 531h2v1h-2zM748 532h2v1h-2zM746 533h2v1h-2zM744 534h2v1h-2zM742 535h2v1h-2zM740 536h2v1h-2zM785 536h4v1h-4zM741 537h2v1h-2zM785 537h1v1h-1zM789 537h3v1h-3zM743 538h2v1h-2zM785 538h1v1h-1zM792 538h1v1h-1zM745 539h2v1h-2zM785 539h1v1h-1zM793 539h2v1h-2zM747 540h2v1h-2zM785 540h1v1h-1zM795 540h1v1h-1zM749 541h2v1h-2zM785 541h1v1h-1zM795 541h1v1h-1zM751 542h2v1h-2zM785 542h1v1h-1zM796 542h1v1h-1zM582 543h1v1h-1zM585 543h1v1h-1zM603 543h1v1h-1zM616 543h1v1h-1zM636 543h1v1h-1zM649 543h1v1h-1zM688 543h1v1h-1zM701 543h1v1h-1zM752 543h2v1h-2zM773 543h13v1h-13zM797 543h1v1h-1zM582 544h1v1h-1zM585 544h1v1h-1zM603 544h2v1h-2zM616 544h2v1h-2zM635 544h2v1h-2zM648 544h2v1h-2zM688 544h3v1h-3zM701 544h1v1h-1zM750 544h2v1h-2zM785 544h1v1h-1zM797 544h1v1h-1zM582 545h1v1h-1zM585 545h1v1h-1zM602 545h1v1h-1zM604 545h1v1h-1zM615 545h1v1h-1zM617 545h1v1h-1zM635 545h1v1h-1zM637 545h1v1h-1zM648 545h1v1h-1zM650 545h1v1h-1zM688 545h1v1h-1zM691 545h2v1h-2zM701 545h1v1h-1zM748 545h2v1h-2zM785 545h1v1h-1zM791 545h4v1h-4zM797 545h1v1h-1zM582 546h1v1h-1zM585 546h1v1h-1zM602 546h1v1h-1zM605 546h1v1h-1zM615 546h1v1h-1zM618 546h1v1h-1zM634 546h1v1h-1zM637 546h1v1h-1zM647 546h1v1h-1zM650 546h1v1h-1zM688 546h1v1h-1zM693 546h2v1h-2zM701 546h1v1h-1zM704 546h1v1h-1zM746 546h2v1h-2zM785 546h1v1h-1zM791 546h2v1h-2zM798 546h1v1h-1zM801 546h2v1h-2zM582 547h1v1h-1zM585 547h1v1h-1zM601 547h1v1h-1zM605 547h1v1h-1zM614 547h1v1h-1zM618 547h1v1h-1zM633 547h1v1h-1zM638 547h1v1h-1zM647 547h1v1h-1zM651 547h1v1h-1zM688 547h1v1h-1zM695 547h2v1h-2zM701 547h1v1h-1zM704 547h1v1h-1zM744 547h2v1h-2zM785 547h1v1h-1zM791 547h2v1h-2zM798 547h1v1h-1zM800 547h1v1h-1zM803 547h2v1h-2zM582 548h1v1h-1zM585 548h1v1h-1zM601 548h1v1h-1zM606 548h1v1h-1zM614 548h1v1h-1zM619 548h1v1h-1zM633 548h1v1h-1zM638 548h1v1h-1zM646 548h1v1h-1zM651 548h1v1h-1zM688 548h1v1h-1zM697 548h2v1h-2zM701 548h6v1h-6zM742 548h2v1h-2zM785 548h1v1h-1zM791 548h2v1h-2zM798 548h2v1h-2zM804 548h1v1h-1zM571 549h12v1h-12zM585 549h10v1h-10zM600 549h1v1h-1zM606 549h1v1h-1zM613 549h1v1h-1zM619 549h1v1h-1zM626 549h1v1h-1zM632 549h1v1h-1zM639 549h1v1h-1zM646 549h1v1h-1zM652 549h1v1h-1zM658 549h5v1h-5zM688 549h6v1h-6zM699 549h3v1h-3zM704 549h1v1h-1zM740 549h2v1h-2zM785 549h1v1h-1zM791 549h2v1h-2zM798 549h2v1h-2zM804 549h12v1h-12zM582 550h1v1h-1zM585 550h1v1h-1zM607 550h1v1h-1zM613 550h1v1h-1zM620 550h1v1h-1zM626 550h1v1h-1zM639 550h1v1h-1zM645 550h1v1h-1zM652 550h1v1h-1zM658 550h1v1h-1zM688 550h1v1h-1zM701 550h2v1h-2zM741 550h2v1h-2zM785 550h1v1h-1zM791 550h2v1h-2zM798 550h1v1h-1zM800 550h1v1h-1zM804 550h1v1h-1zM582 551h1v1h-1zM585 551h1v1h-1zM607 551h1v1h-1zM612 551h1v1h-1zM620 551h1v1h-1zM625 551h1v1h-1zM640 551h1v1h-1zM645 551h1v1h-1zM653 551h1v1h-1zM657 551h1v1h-1zM688 551h1v1h-1zM703 551h2v1h-2zM743 551h2v1h-2zM785 551h1v1h-1zM791 551h2v1h-2zM798 551h1v1h-1zM800 551h4v1h-4zM582 552h1v1h-1zM585 552h1v1h-1zM608 552h1v1h-1zM612 552h1v1h-1zM621 552h1v1h-1zM625 552h1v1h-1zM640 552h1v1h-1zM644 552h1v1h-1zM653 552h1v1h-1zM657 552h1v1h-1zM688 552h1v1h-1zM705 552h2v1h-2zM745 552h2v1h-2zM785 552h1v1h-1zM789 552h4v1h-4zM798 552h1v1h-1zM582 553h1v1h-1zM585 553h1v1h-1zM608 553h1v1h-1zM611 553h1v1h-1zM621 553h1v1h-1zM624 553h1v1h-1zM641 553h1v1h-1zM644 553h1v1h-1zM654 553h1v1h-1zM656 553h1v1h-1zM688 553h1v1h-1zM707 553h2v1h-2zM746 553h1v1h-1zM785 553h1v1h-1zM797 553h1v1h-1zM582 554h1v1h-1zM585 554h1v1h-1zM609 554h1v1h-1zM611 554h1v1h-1zM622 554h1v1h-1zM624 554h1v1h-1zM641 554h1v1h-1zM643 554h1v1h-1zM654 554h1v1h-1zM656 554h1v1h-1zM688 554h1v1h-1zM709 554h2v1h-2zM785 554h1v1h-1zM797 554h1v1h-1zM582 555h1v1h-1zM585 555h1v1h-1zM609 555h2v1h-2zM622 555h2v1h-2zM642 555h2v1h-2zM655 555h1v1h-1zM688 555h1v1h-1zM711 555h2v1h-2zM785 555h1v1h-1zM797 555h1v1h-1zM582 556h1v1h-1zM585 556h1v1h-1zM610 556h1v1h-1zM623 556h1v1h-1zM642 556h1v1h-1zM655 556h1v1h-1zM688 556h1v1h-1zM713 556h2v1h-2zM773 556h13v1h-13zM796 556h1v1h-1zM688 557h1v1h-1zM712 557h2v1h-2zM785 557h1v1h-1zM795 557h1v1h-1zM688 558h1v1h-1zM710 558h2v1h-2zM785 558h1v1h-1zM795 558h1v1h-1zM688 559h1v1h-1zM691 559h1v1h-1zM708 559h2v1h-2zM785 559h1v1h-1zM793 559h2v1h-2zM688 560h1v1h-1zM691 560h1v1h-1zM706 560h2v1h-2zM785 560h1v1h-1zM792 560h1v1h-1zM688 561h1v1h-1zM691 561h1v1h-1zM704 561h2v1h-2zM785 561h1v1h-1zM789 561h3v1h-3zM688 562h6v1h-6zM701 562h3v1h-3zM785 562h4v1h-4zM688 563h1v1h-1zM691 563h1v1h-1zM700 563h2v1h-2zM688 564h1v1h-1zM691 564h1v1h-1zM698 564h2v1h-2zM701 564h6v1h-6zM688 565h1v1h-1zM691 565h1v1h-1zM696 565h2v1h-2zM701 565h1v1h-1zM688 566h1v1h-1zM694 566h2v1h-2zM701 566h1v1h-1zM688 567h1v1h-1zM692 567h2v1h-2zM701 567h1v1h-1zM688 568h1v1h-1zM690 568h2v1h-2zM701 568h1v1h-1zM688 569h2v1h-2zM701 569h1v1h-1zM746 588h1v1h-1zM746 589h1v1h-1zM746 590h1v1h-1zM746 591h1v1h-1zM747 592h2v1h-2zM749 593h2v1h-2zM751 594h2v1h-2zM752 595h2v1h-2zM750 596h2v1h-2zM748 597h2v1h-2zM746 598h2v1h-2zM744 599h2v1h-2zM742 600h2v1h-2zM740 601h2v1h-2zM741 602h2v1h-2zM743 603h2v1h-2zM745 604h2v1h-2zM747 605h2v1h-2zM749 606h2v1h-2zM751 607h2v1h-2zM603 608h1v1h-1zM616 608h1v1h-1zM688 608h1v1h-1zM701 608h1v1h-1zM752 608h2v1h-2zM603 609h2v1h-2zM616 609h2v1h-2zM688 609h3v1h-3zM701 609h1v1h-1zM750 609h2v1h-2zM602 610h1v1h-1zM604 610h1v1h-1zM615 610h1v1h-1zM617 610h1v1h-1zM688 610h1v1h-1zM691 610h2v1h-2zM701 610h1v1h-1zM748 610h2v1h-2zM602 611h1v1h-1zM605 611h1v1h-1zM615 611h1v1h-1zM618 611h1v1h-1zM688 611h1v1h-1zM691 611h1v1h-1zM693 611h2v1h-2zM701 611h1v1h-1zM746 611h2v1h-2zM601 612h1v1h-1zM605 612h1v1h-1zM614 612h1v1h-1zM618 612h1v1h-1zM688 612h1v1h-1zM691 612h1v1h-1zM695 612h2v1h-2zM701 612h1v1h-1zM744 612h2v1h-2zM601 613h1v1h-1zM606 613h1v1h-1zM614 613h1v1h-1zM619 613h1v1h-1zM688 613h1v1h-1zM691 613h1v1h-1zM697 613h2v1h-2zM701 613h6v1h-6zM742 613h2v1h-2zM600 614h1v1h-1zM606 614h1v1h-1zM613 614h1v1h-1zM619 614h1v1h-1zM626 614h4v1h-4zM688 614h6v1h-6zM699 614h3v1h-3zM740 614h2v1h-2zM607 615h1v1h-1zM613 615h1v1h-1zM620 615h1v1h-1zM626 615h1v1h-1zM688 615h1v1h-1zM691 615h1v1h-1zM701 615h2v1h-2zM741 615h2v1h-2zM607 616h1v1h-1zM612 616h1v1h-1zM620 616h1v1h-1zM625 616h1v1h-1zM688 616h1v1h-1zM691 616h1v1h-1zM703 616h2v1h-2zM743 616h2v1h-2zM608 617h1v1h-1zM612 617h1v1h-1zM621 617h1v1h-1zM625 617h1v1h-1zM636 617h1v1h-1zM688 617h1v1h-1zM691 617h1v1h-1zM705 617h2v1h-2zM745 617h2v1h-2zM608 618h1v1h-1zM611 618h1v1h-1zM621 618h1v1h-1zM624 618h1v1h-1zM636 618h1v1h-1zM688 618h1v1h-1zM707 618h2v1h-2zM746 618h1v1h-1zM609 619h1v1h-1zM611 619h1v1h-1zM622 619h1v1h-1zM624 619h1v1h-1zM636 619h1v1h-1zM688 619h1v1h-1zM709 619h2v1h-2zM609 620h2v1h-2zM622 620h2v1h-2zM636 620h1v1h-1zM688 620h1v1h-1zM711 620h2v1h-2zM610 621h1v1h-1zM623 621h1v1h-1zM636 621h1v1h-1zM688 621h1v1h-1zM713 621h2v1h-2zM636 622h1v1h-1zM688 622h1v1h-1zM712 622h2v1h-2zM636 623h1v1h-1zM688 623h1v1h-1zM710 623h2v1h-2zM636 624h1v1h-1zM688 624h1v1h-1zM708 624h2v1h-2zM636 625h1v1h-1zM688 625h1v1h-1zM706 625h2v1h-2zM629 626h14v1h-14zM688 626h1v1h-1zM704 626h2v1h-2zM688 627h6v1h-6zM701 627h4v1h-4zM688 628h1v1h-1zM700 628h2v1h-2zM704 628h1v1h-1zM629 629h14v1h-14zM688 629h1v1h-1zM698 629h2v1h-2zM701 629h6v1h-6zM636 630h1v1h-1zM688 630h1v1h-1zM696 630h2v1h-2zM701 630h1v1h-1zM704 630h1v1h-1zM636 631h1v1h-1zM688 631h1v1h-1zM694 631h2v1h-2zM701 631h1v1h-1zM704 631h1v1h-1zM636 632h1v1h-1zM688 632h1v1h-1zM692 632h2v1h-2zM701 632h1v1h-1zM636 633h1v1h-1zM688 633h1v1h-1zM690 633h2v1h-2zM701 633h1v1h-1zM636 634h1v1h-1zM688 634h2v1h-2zM701 634h1v1h-1zM636 635h1v1h-1zM636 636h1v1h-1zM636 637h1v1h-1zM636 638h1v1h-1zM636 639h1v1h-1zM636 640h1v1h-1zM733 653h1v1h-1zM746 653h1v1h-1zM733 654h2v1h-2zM746 654h2v1h-2zM732 655h1v1h-1zM734 655h1v1h-1zM745 655h1v1h-1zM747 655h1v1h-1zM732 656h1v1h-1zM735 656h1v1h-1zM745 656h1v1h-1zM748 656h1v1h-1zM731 657h1v1h-1zM735 657h1v1h-1zM744 657h1v1h-1zM748 657h1v1h-1zM731 658h1v1h-1zM736 658h1v1h-1zM744 658h1v1h-1zM749 658h1v1h-1zM730 659h1v1h-1zM736 659h1v1h-1zM743 659h1v1h-1zM749 659h1v1h-1zM727 660h4v1h-4zM737 660h1v1h-1zM743 660h1v1h-1zM750 660h1v1h-1zM756 660h4v1h-4zM737 661h1v1h-1zM742 661h1v1h-1zM750 661h1v1h-1zM756 661h1v1h-1zM738 662h1v1h-1zM742 662h1v1h-1zM751 662h1v1h-1zM755 662h1v1h-1zM738 663h1v1h-1zM741 663h1v1h-1zM751 663h1v1h-1zM755 663h1v1h-1zM739 664h1v1h-1zM741 664h1v1h-1zM752 664h1v1h-1zM754 664h1v1h-1zM739 665h2v1h-2zM752 665h1v1h-1zM754 665h1v1h-1zM668 666h1v1h-1zM740 666h1v1h-1zM753 666h1v1h-1zM668 667h1v1h-1zM668 668h1v1h-1zM668 669h1v1h-1zM669 670h2v1h-2zM671 671h2v1h-2zM673 672h2v1h-2zM674 673h2v1h-2zM672 674h2v1h-2zM670 675h2v1h-2zM668 676h2v1h-2zM666 677h2v1h-2zM664 678h2v1h-2zM662 679h2v1h-2zM663 680h2v1h-2zM665 681h2v1h-2zM667 682h2v1h-2zM669 683h2v1h-2zM671 684h2v1h-2zM673 685h2v1h-2zM674 686h2v1h-2zM672 687h2v1h-2zM670 688h2v1h-2zM668 689h2v1h-2zM666 690h2v1h-2zM664 691h2v1h-2zM662 692h2v1h-2zM663 693h2v1h-2zM665 694h2v1h-2zM667 695h2v1h-2zM668 696h1v1h-1zM668 697h1v1h-1zM668 698h1v1h-1zM668 699h1v1h-1zM733 718h1v1h-1zM746 718h1v1h-1zM733 719h2v1h-2zM746 719h2v1h-2zM732 720h1v1h-1zM734 720h1v1h-1zM745 720h1v1h-1zM747 720h1v1h-1zM732 721h1v1h-1zM735 721h1v1h-1zM745 721h1v1h-1zM748 721h1v1h-1zM731 722h1v1h-1zM735 722h1v1h-1zM744 722h1v1h-1zM748 722h1v1h-1zM731 723h1v1h-1zM736 723h1v1h-1zM744 723h1v1h-1zM749 723h1v1h-1zM730 724h1v1h-1zM736 724h1v1h-1zM743 724h1v1h-1zM749 724h1v1h-1zM727 725h4v1h-4zM737 725h1v1h-1zM743 725h1v1h-1zM750 725h1v1h-1zM756 725h4v1h-4zM737 726h1v1h-1zM742 726h1v1h-1zM750 726h1v1h-1zM756 726h1v1h-1zM738 727h1v1h-1zM742 727h1v1h-1zM751 727h1v1h-1zM755 727h1v1h-1zM738 728h1v1h-1zM741 728h1v1h-1zM751 728h1v1h-1zM755 728h1v1h-1zM739 729h1v1h-1zM741 729h1v1h-1zM752 729h1v1h-1zM754 729h1v1h-1zM739 730h2v1h-2zM752 730h1v1h-1zM754 730h1v1h-1zM740 731h1v1h-1zM753 731h1v1h-1z" fill="#000080"/>
<path d="M673 478h1v1h-1zM823 478h1v1h-1zM862 478h1v1h-1zM629 640h1v1h-1zM661 699h1v1h-1z" fill="#000"/>
<text transform="translate(684.8 440.0) rotate(-90)" font-size="8" textLength="13.0" lengthAdjust="spacing">Vin</text>
<text x="691.0" y="448.5" font-size="8" textLength="10.5" lengthAdjust="spacing">V3</text>
<text x="691.0" y="482.0" font-size="8" textLength="73.0" lengthAdjust="spacing">SINE(0 8 6590)</text>
<text transform="translate(834.3 445.3) rotate(-90)" font-size="8" textLength="12.9" lengthAdjust="spacing">V+</text>
<text x="840.9" y="448.7" font-size="8" textLength="10.4" lengthAdjust="spacing">V2</text>
<text x="841.5" y="481.7" font-size="8" textLength="4.5" lengthAdjust="spacing">9</text>
<text transform="translate(873.6 445.3) rotate(-90)" font-size="8" textLength="9.3" lengthAdjust="spacing">V-</text>
<text x="880.0" y="448.7" font-size="8" textLength="10.3" lengthAdjust="spacing">V1</text>
<text x="880.2" y="481.7" font-size="8" textLength="8.9" lengthAdjust="spacing">-9</text>
<text x="581.5" y="461.9" font-size="8" textLength="51.0" lengthAdjust="spacing">.tran 100m</text>
<text x="551.3" y="552.8" font-size="8" textLength="13.1" lengthAdjust="spacing">Vin</text>
<text x="577.5" y="540.6" font-size="8" textLength="11.3" lengthAdjust="spacing">C1</text>
<text x="572.8" y="564.8" font-size="8" textLength="22.2" lengthAdjust="spacing">100n</text>
<text x="607.7" y="540.8" font-size="8" textLength="10.6" lengthAdjust="spacing">R2</text>
<text x="599.8" y="564.7" font-size="8" textLength="26.2" lengthAdjust="spacing">22.1k</text>
<text x="640.9" y="540.8" font-size="8" textLength="10.6" lengthAdjust="spacing">R1</text>
<text x="633.0" y="564.7" font-size="8" textLength="25.9" lengthAdjust="spacing">6.81k</text>
<text transform="translate(703.6 543.2) rotate(-90)" font-size="8" textLength="12.2" lengthAdjust="spacing">V+</text>
<text transform="translate(703.8 579.2) rotate(-90)" font-size="8" textLength="8.8" lengthAdjust="spacing">V-</text>
<text x="707.0" y="544.3" font-size="3.5" textLength="3.3" lengthAdjust="spacing">U1</text>
<text x="707.0" y="569.7" font-size="3.5" textLength="17.0" lengthAdjust="spacing">LM339/NS</text>
<text transform="translate(749.6 523.4) rotate(-90)" font-size="8" textLength="12.4" lengthAdjust="spacing">V+</text>
<text x="725.5" y="535.0" font-size="8" textLength="12.1" lengthAdjust="spacing">R6</text>
<text x="710.9" y="550.0" font-size="8" textLength="26.7" lengthAdjust="spacing">22.1k</text>
<text x="785.0" y="530.8" font-size="3.5" textLength="3.7" lengthAdjust="spacing">U2</text>
<text x="779.2" y="570.0" font-size="3.5" textLength="13.6" lengthAdjust="spacing">CD4093</text>
<text x="846.0" y="552.9" font-size="8" textLength="36.5" lengthAdjust="spacing">Demod1</text>
<text x="607.5" y="605.6" font-size="8" textLength="10.5" lengthAdjust="spacing">R3</text>
<text x="600.0" y="629.8" font-size="8" textLength="25.6" lengthAdjust="spacing">22.1k</text>
<text x="638.5" y="621.0" font-size="8" textLength="10.5" lengthAdjust="spacing">C2</text>
<text x="638.3" y="640.6" font-size="8" textLength="18.1" lengthAdjust="spacing">22n</text>
<text transform="translate(703.8 607.7) rotate(-90)" font-size="8" textLength="8.5" lengthAdjust="spacing">V-</text>
<text transform="translate(703.8 647.9) rotate(-90)" font-size="8" textLength="12.0" lengthAdjust="spacing">V+</text>
<text x="707.3" y="608.7" font-size="3.5" textLength="16.7" lengthAdjust="spacing">LM339/NS</text>
<text x="707.5" y="635.0" font-size="3.5" textLength="3.5" lengthAdjust="spacing">U3</text>
<text transform="translate(749.6 587.7) rotate(-90)" font-size="8" textLength="12.2" lengthAdjust="spacing">V+</text>
<text x="725.6" y="599.6" font-size="8" textLength="11.7" lengthAdjust="spacing">R5</text>
<text x="710.6" y="614.8" font-size="8" textLength="26.3" lengthAdjust="spacing">22.1k</text>
<text x="846.0" y="624.9" font-size="8" textLength="36.5" lengthAdjust="spacing">Demod2</text>
<text x="737.5" y="650.8" font-size="8" textLength="12.2" lengthAdjust="spacing">R7</text>
<text x="730.7" y="675.1" font-size="8" textLength="23.3" lengthAdjust="spacing">274k</text>
<text x="647.5" y="677.6" font-size="8" textLength="11.6" lengthAdjust="spacing">R4</text>
<text x="642.2" y="692.6" font-size="8" textLength="16.2" lengthAdjust="spacing">150</text>
<text x="737.5" y="715.5" font-size="8" textLength="12.2" lengthAdjust="spacing">R8</text>
<text x="730.7" y="739.9" font-size="8" textLength="23.3" lengthAdjust="spacing">475k</text>
</svg>
<div id="sb1" style="position:absolute;left:6.8px;top:760px;height:16px;line-height:16px;font-size:11px;font-stretch:condensed;letter-spacing:-0.35px;white-space:pre;color:#000">x = 55.927ms</div>
<div id="sb2" style="position:absolute;left:85px;top:760px;height:16px;line-height:16px;font-size:11px;font-stretch:condensed;letter-spacing:-0.22px;white-space:pre;color:#000">y = -4.24V</div>
<div style="position:absolute;left:1380px;top:758px;width:39px;height:1px;background:#808080;"></div>
<div style="position:absolute;left:1380px;top:758px;width:1px;height:15px;background:#808080;"></div>
<div style="position:absolute;left:1380px;top:773px;width:39px;height:1px;background:#ffffff;"></div>
<svg width="1440" height="778"><path d="M1424 774 L1436 762 M1428 774 L1436 766 M1432 774 L1436 770" stroke="#fff" stroke-width="1.4" fill="none"/><rect x="1438" y="776" width="2" height="2" fill="#c03020"/><rect x="0" y="775" width="2" height="3" fill="#501040"/></svg>
</body></html>
